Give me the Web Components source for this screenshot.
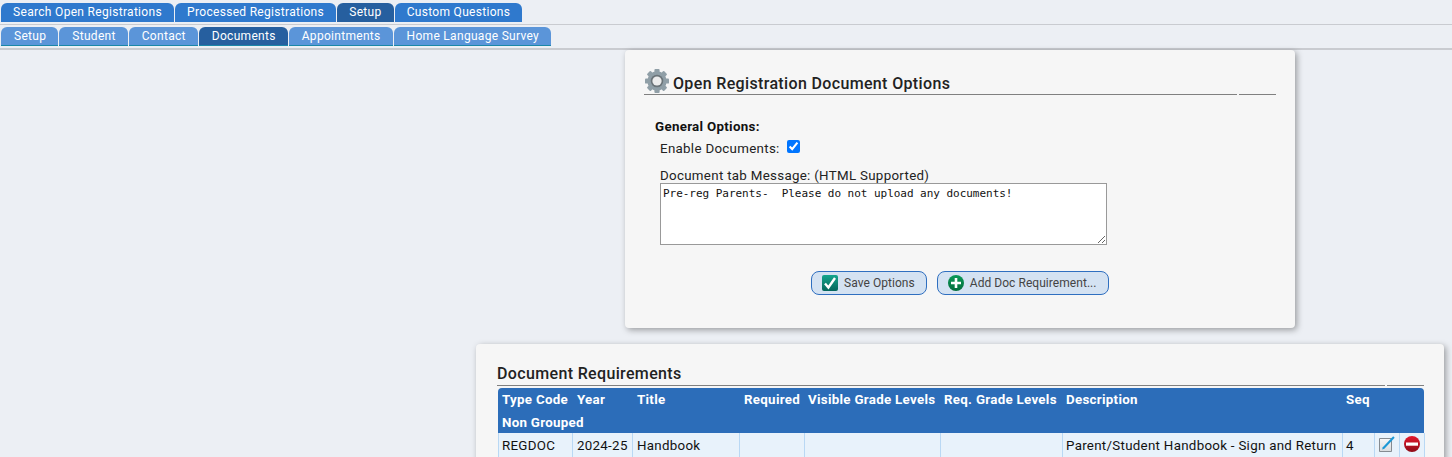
<!DOCTYPE html>
<html>
<head>
<meta charset="utf-8">
<title>Open Registration Document Options</title>
<style>
    html, body { margin: 0; padding: 0; }
    body {
        background: #eceff4;
        font-family: Roboto, "Liberation Sans", sans-serif;
        font-size: 13.33px;
        color: #111;
        height: 457px;
        overflow: hidden;
    }
</style>
</head>
<body>
<tab-bar>
    <tab-item>Search Open Registrations</tab-item>
    <tab-item>Processed Registrations</tab-item>
    <tab-item active>Setup</tab-item>
    <tab-item>Custom Questions</tab-item>
</tab-bar>
<tab-bar sub>
    <tab-item sub>Setup</tab-item>
    <tab-item sub>Student</tab-item>
    <tab-item sub>Contact</tab-item>
    <tab-item sub active>Documents</tab-item>
    <tab-item sub>Appointments</tab-item>
    <tab-item sub>Home Language Survey</tab-item>
</tab-bar>

<page-main>
    <panel-card class="options">
        <section-title gear>Open Registration Document Options</section-title>
        <doc-options></doc-options>
    </panel-card>
    <panel-card class="requirements">
        <section-title>Document Requirements</section-title>
        <doc-table></doc-table>
    </panel-card>
</page-main>

<script>
customElements.define('tab-bar', class extends HTMLElement {
    constructor() {
        super();
        this.attachShadow({mode: 'open'}).innerHTML = `
<style>
    :host {
        display: flex;
        gap: 1px;
        padding: 3px 0 2px 1px;
        height: 19px;
        border-bottom: 1px solid #c9cbd0;
    }
    :host([sub]) {
        padding-top: 2px;
        border-bottom: 2px solid #c9cbd0;
    }
</style>
<slot></slot>`;
    }
});

customElements.define('tab-item', class extends HTMLElement {
    constructor() {
        super();
        this.attachShadow({mode: 'open'}).innerHTML = `
<style>
    :host {
        display: flex;
        align-items: center;
        padding: 0 12.1px 2px;
        height: 19px;
        box-sizing: border-box;
        background: #2f79cd;
        color: #fff;
        font-size: 12px;
        letter-spacing: 0.305px;
        border-radius: 6px 6px 0 0;
        white-space: nowrap;
    }
    :host([sub]) {
        padding: 0 12px 1px 13px;
        letter-spacing: 0.3px;
        background: #5b95d9;
        border-bottom: 1px solid #1b87a8;
    }
    :host([active]) {
        background: #265f9f;
    }
</style>
<slot></slot>`;
    }
});

customElements.define('page-main', class extends HTMLElement {
    constructor() {
        super();
        this.attachShadow({mode: 'open'}).innerHTML = `
<style>
    :host {
        display: flex;
        flex-direction: column;
        align-items: center;
        gap: 16px;
        width: 968px;
        margin-left: 476px;
    }
</style>
<slot></slot>`;
    }
});

customElements.define('panel-card', class extends HTMLElement {
    constructor() {
        super();
        this.attachShadow({mode: 'open'}).innerHTML = `
<style>
    :host {
        display: block;
        box-sizing: border-box;
        background: #f6f6f6;
        border-radius: 4px;
        box-shadow: 2px 2px 6px rgba(0,0,0,0.35);
    }
    :host(.options) {
        width: 670px;
        height: 278px;
        padding: 19px 19px 0;
    }
    :host(.requirements) {
        width: 968px;
        height: 200px;
        padding: 20px 20px 0 21px;
    }
</style>
<slot></slot>`;
    }
});

customElements.define('section-title', class extends HTMLElement {
    constructor() {
        super();
        let gear = this.hasAttribute('gear') ? `
<svg class="gear" width="24" height="24" viewBox="0 0 26 26">
    <g fill="#909fa7">
        <circle cx="13" cy="13" r="10.500"/>
        <rect x="10.200" y="0" width="5.600" height="26" rx="1"/>
        <rect x="10.200" y="0" width="5.600" height="26" rx="1" transform="rotate(45 13 13)"/>
        <rect x="10.200" y="0" width="5.600" height="26" rx="1" transform="rotate(90 13 13)"/>
        <rect x="10.200" y="0" width="5.600" height="26" rx="1" transform="rotate(135 13 13)"/>
    </g>
    <circle cx="13" cy="13" r="6.800" fill="#6b7479"/>
    <circle cx="13" cy="13" r="5" fill="#ececec"/>
</svg>` : '';
        this.attachShadow({mode: 'open'}).innerHTML = `
<style>
    :host {
        display: flex;
        gap: 2px;
        align-items: flex-end;
    }
    .main {
        flex: 1;
        display: flex;
        align-items: flex-end;
        gap: 4px;
        border-bottom: 1px solid #808080;
        font-size: 16px;
        font-weight: 500;
        letter-spacing: 0.35px;
        line-height: 19px;
        color: #222;
        padding-bottom: 2px;
    }
    :host([gear]) .main { padding-bottom: 1px; }
    .gear { margin-left: 1px; }
    .end {
        width: 37px;
        border-bottom: 1px solid #808080;
    }
</style>
<div class="main">${gear}<slot></slot></div>
<div class="end"></div>`;
    }
});

customElements.define('action-button', class extends HTMLElement {
    constructor() {
        super();
        this.attachShadow({mode: 'open'}).innerHTML = `
<style>
    :host {
        display: inline-flex;
        align-items: center;
        box-sizing: border-box;
        height: 24px;
        gap: 6px;
        padding: 0 11px 0 10px;
        border: 1px solid #2f6fc0;
        border-radius: 8px;
        background: #d4e2f2;
        color: #444;
        font-size: 12px;
        letter-spacing: 0.05px;
        white-space: nowrap;
    }
</style>
<slot name="icon"></slot><slot></slot>`;
    }
});

customElements.define('doc-options', class extends HTMLElement {
    constructor() {
        super();
        this.attachShadow({mode: 'open'}).innerHTML = `
<style>
    :host {
        display: block;
        padding: 24px 0 0 11px;
        font-size: 13.33px;
        letter-spacing: 0.3px;
    }
    .head {
        font-weight: 700;
        line-height: 15px;
        color: #111;
    }
    .row {
        display: flex;
        align-items: center;
        gap: 7px;
        margin: 4px 0 0 5px;
        height: 20px;
        color: #222;
    }
    input[type=checkbox] {
        margin: 0 0 3px 0;
        width: 13px;
        height: 13px;
    }
    .label {
        margin: 10px 0 0 5px;
        line-height: 15px;
        color: #222;
    }
    textarea {
        display: block;
        box-sizing: border-box;
        width: 447px;
        height: 62px;
        margin: 0 0 0 5px;
        padding: 2px;
        border: 1px solid #999;
        border-radius: 0;
        background: #fff;
        font-family: "DejaVu Sans Mono", "Liberation Mono", monospace;
        font-size: 11px;
        line-height: 15px;
        letter-spacing: -0.03px;
        color: #111;
    }
    .buttons {
        display: flex;
        gap: 10px;
        margin: 26px 0 0 156px;
    }
</style>
<div class="head">General Options:</div>
<div class="row"><span>Enable Documents:</span><input type="checkbox" checked></div>
<div class="label">Document tab Message: (HTML Supported)</div>
<textarea>Pre-reg Parents-  Please do not upload any documents!</textarea>
<div class="buttons">
    <action-button>
        <svg slot="icon" width="16" height="16" viewBox="0 0 16 16">
            <defs><linearGradient id="t" x1="0" y1="0" x2="0" y2="1"><stop offset="0" stop-color="#14a58c"/><stop offset="1" stop-color="#05665c"/></linearGradient></defs>
            <rect width="16" height="16" rx="2" fill="url(#t)"/>
            <path d="M3 8.500l3.400 4L13 3" fill="none" stroke="#fff" stroke-width="2.400"/>
        </svg>
        Save Options
    </action-button>
    <action-button>
        <svg slot="icon" width="16" height="16" viewBox="0 0 16 16">
            <defs><linearGradient id="g" x1="0" y1="0" x2="0" y2="1"><stop offset="0" stop-color="#0a9a58"/><stop offset="1" stop-color="#056d3c"/></linearGradient></defs>
            <circle cx="8" cy="8" r="8" fill="url(#g)"/>
            <path d="M8 3v10M3 8h10" stroke="#fff" stroke-width="2.600"/>
        </svg>
        Add Doc Requirement...
    </action-button>
</div>`;
    }
});

customElements.define('doc-table', class extends HTMLElement {
    constructor() {
        super();
        this.attachShadow({mode: 'open'}).innerHTML = `
<style>
    :host {
        display: block;
        margin-top: 2px;
        margin-left: 1px;
        width: 926px;
    }
    table {
        border-collapse: separate;
        border-spacing: 0;
        table-layout: fixed;
        width: 926px;
        font-size: 13.33px;
        letter-spacing: 0.29px;
    }
    th {
        background: #2c6db9;
        color: #fff;
        font-weight: 700;
        text-align: left;
        padding: 0 0 0 4px;
        height: 23px;
        white-space: nowrap;
    }
    tr.head th:first-child { border-top-left-radius: 4px; }
    tr.head th:last-child { border-top-right-radius: 4px; }
    tr.group th { height: 22px; }
    td {
        background: #e8f2fb;
        border-right: 1px solid #b9d8f4;
        padding: 0 0 0 4px;
        height: 25px;
        white-space: nowrap;
        color: #111;
    }
    tr.head th:nth-child(n+5), td:nth-child(n+5) { padding-left: 3px; }
    td:first-child { box-shadow: inset 1px 0 0 #b9d8f4; }
    td:last-child { border-right: 0; box-shadow: 1px 0 0 #b9d8f4; }
    td.icon { padding: 0; text-align: center; }
    td svg { display: block; margin: 0 auto 3px; }
</style>
<table>
    <colgroup>
        <col style="width:75px"><col style="width:60px"><col style="width:107px">
        <col style="width:65px"><col style="width:136px"><col style="width:122px">
        <col style="width:280px"><col style="width:32px"><col style="width:25px"><col style="width:24px">
    </colgroup>
    <tr class="head">
        <th>Type Code</th><th>Year</th><th>Title</th><th>Required</th>
        <th>Visible Grade Levels</th><th>Req. Grade Levels</th><th>Description</th><th>Seq</th><th></th><th></th>
    </tr>
    <tr class="group"><th colspan="10">Non Grouped</th></tr>
    <tr>
        <td>REGDOC</td><td>2024-25</td><td>Handbook</td><td></td><td></td><td></td>
        <td>Parent/Student Handbook - Sign and Return</td><td>4</td>
        <td class="icon">
            <svg width="16" height="16" viewBox="0 0 16 16">
                <defs><linearGradient id="p" x1="0" y1="0" x2="0" y2="1"><stop offset="0" stop-color="#f6f7f8"/><stop offset="1" stop-color="#d8dbde"/></linearGradient></defs>
                <path d="M.5 2.500h12v13H.5z" fill="url(#p)" stroke="#858b91"/>
                <path d="M3.800 11.200L14.200.3l1.500 1.400L5.400 12.700l-2.200.9z" fill="#1c98d6"/>
            </svg>
        </td>
        <td class="icon">
            <svg width="16" height="16" viewBox="0 0 16 16">
                <defs><linearGradient id="r" x1="0" y1="0" x2="0" y2="1"><stop offset="0" stop-color="#e4182c"/><stop offset="1" stop-color="#8e0c18"/></linearGradient></defs>
                <circle cx="8" cy="8" r="8" fill="url(#r)"/>
                <rect x="2" y="6.500" width="12" height="3.200" fill="#fff"/>
            </svg>
        </td>
    </tr>
</table>`;
    }
});
</script>
</body>
</html>
